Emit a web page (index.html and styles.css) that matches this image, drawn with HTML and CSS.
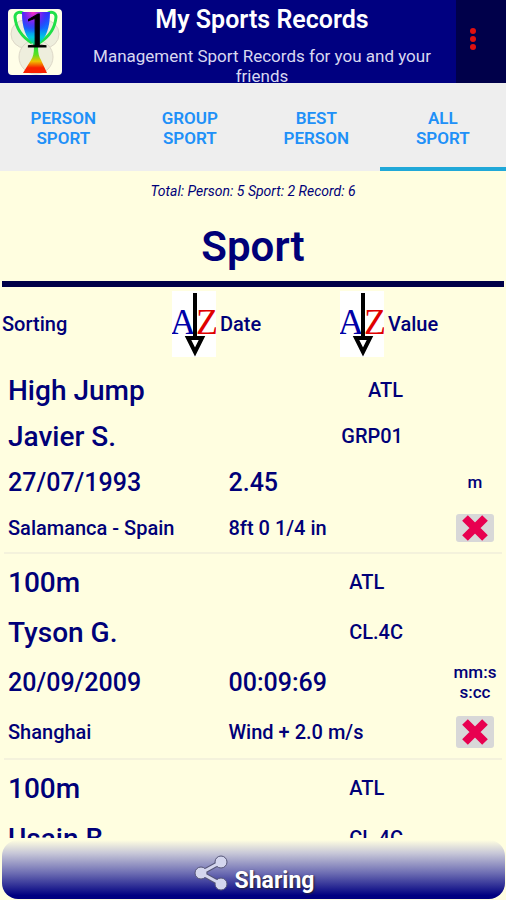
FILE: index.html
```html
<!DOCTYPE html>
<html lang="en">
<head>
  <meta charset="utf-8">
  <meta name="viewport" content="width=device-width">
  <title>My Sports Records</title>
  <link rel="stylesheet" href="styles.css">
</head>
<body>
<svg width="0" height="0" class="defs" aria-hidden="true">
  <symbol id="sort" viewBox="0 0 44 66">
    <rect width="44" height="66" fill="#fff"/>
    <text x="-2" y="43" class="letter" fill="#0000a8">A</text>
    <text x="24" y="43" class="letter" fill="#e00000">Z</text>
    <path d="M23 2v45" stroke="#000" stroke-width="4"/>
    <path d="M16 47h14l-7 14z" fill="#fff" stroke="#000" stroke-width="4"/>
  </symbol>
  <symbol id="cross" viewBox="0 0 28 28">
    <path d="M4 4l20 20M24 4L4 24" stroke="#e80050" stroke-width="8"/>
  </symbol>
</svg>

<header class="header">
  <svg class="logo" viewBox="0 0 54 66" aria-hidden="true">
    <defs>
      <linearGradient id="cup" x1="0" y1="0" x2="0" y2="1">
        <stop offset="0" stop-color="#3030ff"/>
        <stop offset=".45" stop-color="#1070ff"/>
        <stop offset=".7" stop-color="#00c8e0"/>
        <stop offset="1" stop-color="#20e040"/>
      </linearGradient>
      <radialGradient id="glow" cx=".4" cy="0" r=".6">
        <stop offset="0" stop-color="#ff30c0"/>
        <stop offset=".5" stop-color="#8020f0" stop-opacity=".8"/>
        <stop offset="1" stop-color="#2020f0" stop-opacity="0"/>
      </radialGradient>
      <linearGradient id="base" x1="0" y1="0" x2="0" y2="1">
        <stop offset="0" stop-color="#20e040"/>
        <stop offset=".3" stop-color="#60e020"/>
        <stop offset=".55" stop-color="#f0c000"/>
        <stop offset=".8" stop-color="#f82000"/>
      </linearGradient>
    </defs>
    <rect width="54" height="66" rx="4" fill="#fffee8"/>
    <g fill="#eeeedd" stroke="#ddd8c8">
      <circle cx="17" cy="25" r="14"/>
      <circle cx="37" cy="25" r="14"/>
      <circle cx="28" cy="48" r="17"/>
    </g>
    <path d="M15 4c-4-2-8 0-8 4 1 12 7 20 17 26M40 4c4-2 8 0 8 4-1 12-7 20-17 26" fill="none" stroke="#20e048" stroke-width="3"/>
    <path d="M14 3h28c0 16-4 26-11 32l-1 4h-4l-1-4C18 29 14 19 14 3z" fill="url(#cup)"/>
    <path d="M14 3h28c0 16-4 26-11 32l-1 4h-4l-1-4C18 29 14 19 14 3z" fill="url(#glow)"/>
    <path d="M26 38h4c0 6 1 10 3 13l6 13H15l8-13c2-3 3-7 3-13z" fill="url(#base)"/>
    <text x="16" y="38" class="first">1</text>
  </svg>
  <div class="heading">
    <h1>My Sports Records</h1>
    <p>Management Sport Records for you and your friends</p>
  </div>
  <button class="menu" aria-label="Menu">
    <svg viewBox="0 0 8 24" fill="#e01010"><circle cx="4" cy="4" r="3"/><circle cx="4" cy="12" r="3"/><circle cx="4" cy="20" r="3"/></svg>
  </button>
</header>

<nav class="tabs">
  <a href="#person">PERSON<br>SPORT</a>
  <a href="#group">GROUP<br>SPORT</a>
  <a href="#best">BEST<br>PERSON</a>
  <a href="#all" class="active" aria-current="page">ALL<br>SPORT</a>
</nav>

<main>
  <p class="total">Total: Person: 5 Sport: 2 Record: 6</p>
  <h2>Sport</h2>
  <div class="sorting">
    <span>Sorting</span>
    <button><svg aria-hidden="true"><use href="#sort"/></svg>Date</button>
    <button><svg aria-hidden="true"><use href="#sort"/></svg>Value</button>
  </div>

  <ul class="records">
    <li class="record compact">
      <div class="who">
        <span class="name">High Jump</span><span class="code">ATL</span>
        <span class="name">Javier S.</span><span class="code">GRP01</span>
      </div>
      <div class="result">
        <span class="big">27/07/1993</span><span class="big">2.45</span><span class="unit">m</span>
        <span>Salamanca - Spain</span><span>8ft 0 1/4 in</span>
        <button class="delete" aria-label="Delete"><svg><use href="#cross"/></svg></button>
      </div>
    </li>
    <li class="record">
      <div class="who">
        <span class="name">100m</span><span class="code">ATL</span>
        <span class="name">Tyson G.</span><span class="code">CL.4C</span>
      </div>
      <div class="result">
        <span class="big">20/09/2009</span><span class="big">00:09:69</span><span class="unit">mm:ss:cc</span>
        <span>Shanghai</span><span>Wind + 2.0 m/s</span>
        <button class="delete" aria-label="Delete"><svg><use href="#cross"/></svg></button>
      </div>
    </li>
    <li class="record">
      <div class="who">
        <span class="name">100m</span><span class="code">ATL</span>
        <span class="name">Usain B.</span><span class="code">CL.4C</span>
      </div>
    </li>
  </ul>
</main>

<footer>
  <button class="share">
    <svg viewBox="0 0 36 36" aria-hidden="true">
      <path d="M28 7L8 18l20 11" fill="none" stroke="#555577" stroke-width="5"/>
      <g fill="#d4d6ee" stroke="#555577"><circle cx="28" cy="7" r="6"/><circle cx="8" cy="18" r="6"/><circle cx="28" cy="29" r="6"/></g>
      <path d="M28 7L8 18l20 11" fill="none" stroke="#d4d6ee" stroke-width="3"/>
    </svg>
    <span>Sharing</span>
  </button>
</footer>
</body>
</html>
```

FILE: styles.css
```css
* {
  box-sizing: border-box;
}
body {
  margin: 0;
  height: 100vh;
  display: flex;
  flex-direction: column;
  background: #fffee0;
  color: #000078;
  font-family: Roboto, "Liberation Sans", sans-serif;
  font-size: 20px;
  font-weight: 500;
}
h1, h2, p, ul {
  margin: 0;
  padding: 0;
}
button {
  border: 0;
  padding: 0;
  background: none;
  color: inherit;
  font: inherit;
}
.defs {
  position: absolute;
}
.letter {
  font: 36px "Liberation Serif", serif;
}
.first {
  font: 50px "Liberation Serif", serif;
  stroke: #000;
}

.header {
  display: flex;
  height: 83px;
  background: #000080;
  color: #fff;
  overflow: hidden;
}
.logo {
  width: 54px;
  height: 66px;
  margin: 9px 6px 0 8px;
}
.heading {
  flex: 1;
  padding: 4px 16px 0;
  text-align: center;
}
h1 {
  font-size: 25px;
  line-height: 32px;
  font-weight: 600;
}
.heading p {
  margin-top: 10px;
  font-size: 17px;
  line-height: 20px;
  font-weight: 400;
  color: #d8d8f0;
}
.menu {
  width: 50px;
  padding-right: 16px;
  background: #00004a;
}
.menu svg {
  width: 8px;
  height: 24px;
}

.tabs {
  display: grid;
  grid-template-columns: repeat(4, 1fr);
  height: 88px;
  background: #eee;
}
.tabs a {
  padding-top: 25px;
  border-bottom: 4px solid transparent;
  color: #2090f8;
  font-size: 17px;
  line-height: 20px;
  font-weight: 600;
  text-align: center;
  text-decoration: none;
}
.tabs .active {
  border-color: #20a8d8;
}

main {
  flex: 1;
  min-height: 0;
  overflow: hidden;
}
.total {
  padding-top: 10px;
  font-size: 14px;
  line-height: 20px;
  font-weight: 400;
  font-style: italic;
  text-align: center;
}
h2 {
  margin: 0 2px;
  padding: 24px 0 12px;
  border-bottom: 6px solid #000048;
  font-size: 42px;
  line-height: 44px;
  font-weight: 600;
  text-align: center;
}
.sorting {
  display: grid;
  grid-template-columns: repeat(3, 1fr);
  align-items: center;
  padding: 4px 0 7px 2px;
}
.sorting button {
  display: flex;
  align-items: center;
  gap: 4px;
  padding-left: 2px;
}
.sorting svg {
  width: 44px;
  height: 66px;
}

.records {
  list-style: none;
}
.record {
  margin: 0 4px;
  padding: 3px 4px 1px;
  border-bottom: 2px solid #f4f2dc;
}
.who, .result {
  display: grid;
  grid-auto-rows: 50px;
  align-items: center;
}
.compact .who, .compact .result {
  grid-auto-rows: 46px;
}
.who {
  grid-template-columns: 1fr auto;
  padding-right: 95px;
}
.result {
  grid-template-columns: 45% 1fr 46px;
}
.name {
  font-size: 28px;
}
.compact .code {
  text-align: right;
}
.big {
  font-size: 25px;
}
.unit {
  font-size: 17px;
  line-height: 20px;
  text-align: center;
  word-break: break-all;
}
.delete {
  display: flex;
  align-items: center;
  justify-content: center;
  justify-self: center;
  width: 38px;
  height: 32px;
  border-radius: 3px;
  background: #d8d8d8;
}
.compact .delete {
  height: 28px;
}
.delete svg {
  width: 28px;
  height: 28px;
}

footer {
  padding: 2px 1px 1px 2px;
}
.share {
  display: flex;
  justify-content: center;
  gap: 6px;
  width: 100%;
  height: 59px;
  padding-top: 15px;
  border-radius: 16px;
  background: linear-gradient(#fffee0, #c8c8d8 22%, #7070b4 55%, #000080 94%);
  color: #fff;
  font-size: 23px;
  font-weight: 700;
}
.share svg {
  width: 36px;
  height: 36px;
}
.share span {
  padding-top: 12px;
  text-shadow: 1px 1px 2px #223;
}
```
